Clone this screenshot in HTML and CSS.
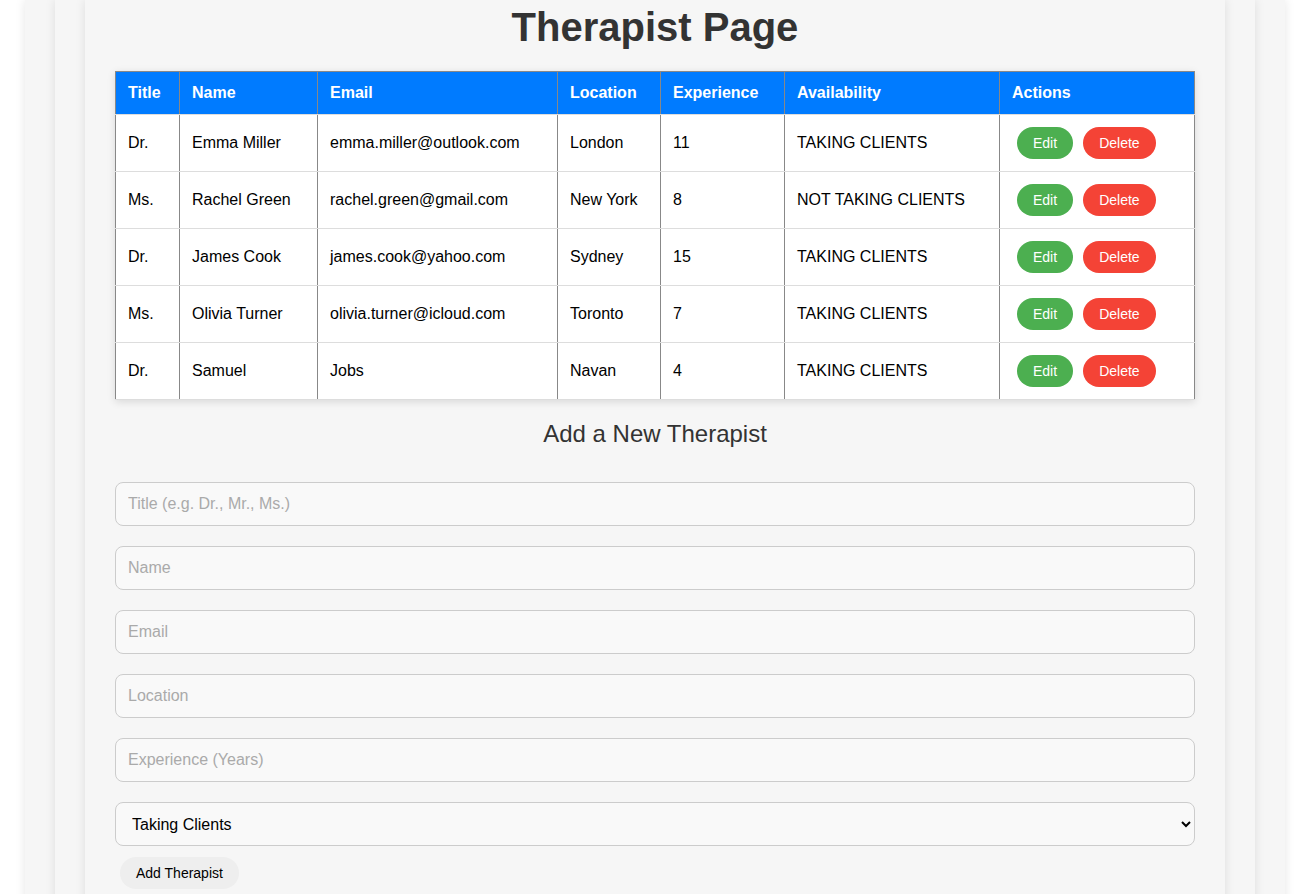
FILE: index.html
```html
<!DOCTYPE html>
<html lang="en">
<head>
<meta charset="utf-8">
<title>Therapist Page</title>
<link rel="stylesheet" href="styles.css">
</head>
<body>
<div class="layer layer-outer">
  <div class="layer layer-mid">
    <div class="layer layer-inner">
      <h1 class="page-title">Therapist Page</h1>
      <table class="therapists">
        <colgroup>
          <col class="c-title"><col class="c-name"><col class="c-email"><col class="c-loc"><col class="c-exp"><col class="c-avail"><col class="c-act">
        </colgroup>
        <thead>
          <tr><th>Title</th><th>Name</th><th>Email</th><th>Location</th><th>Experience</th><th>Availability</th><th>Actions</th></tr>
        </thead>
        <tbody>
          <tr><td>Dr.</td><td>Emma Miller</td><td>emma.miller@outlook.com</td><td>London</td><td>11</td><td>TAKING CLIENTS</td><td><button class="btn btn-edit">Edit</button><button class="btn btn-delete">Delete</button></td></tr>
          <tr><td>Ms.</td><td>Rachel Green</td><td>rachel.green@gmail.com</td><td>New York</td><td>8</td><td>NOT TAKING CLIENTS</td><td><button class="btn btn-edit">Edit</button><button class="btn btn-delete">Delete</button></td></tr>
          <tr><td>Dr.</td><td>James Cook</td><td>james.cook@yahoo.com</td><td>Sydney</td><td>15</td><td>TAKING CLIENTS</td><td><button class="btn btn-edit">Edit</button><button class="btn btn-delete">Delete</button></td></tr>
          <tr><td>Ms.</td><td>Olivia Turner</td><td>olivia.turner@icloud.com</td><td>Toronto</td><td>7</td><td>TAKING CLIENTS</td><td><button class="btn btn-edit">Edit</button><button class="btn btn-delete">Delete</button></td></tr>
          <tr><td>Dr.</td><td>Samuel</td><td>Jobs</td><td>Navan</td><td>4</td><td>TAKING CLIENTS</td><td><button class="btn btn-edit">Edit</button><button class="btn btn-delete">Delete</button></td></tr>
        </tbody>
      </table>
      <h2 class="form-title">Add a New Therapist</h2>
      <form class="add-form">
        <input class="field" type="text" placeholder="Title (e.g. Dr., Mr., Ms.)">
        <input class="field" type="text" placeholder="Name">
        <input class="field" type="text" placeholder="Email">
        <input class="field" type="text" placeholder="Location">
        <input class="field" type="text" placeholder="Experience (Years)">
        <select class="field field-select">
          <option>Taking Clients</option>
          <option>Not Taking Clients</option>
        </select>
        <button type="button" class="btn btn-add">Add Therapist</button>
      </form>
    </div>
  </div>
</div>
</body>
</html>
```
FILE: styles.css
```css
* { box-sizing: border-box; }
html, body { margin: 0; padding: 0; }
body {
  background: #ffffff;
  font-family: "Liberation Sans", Arial, sans-serif;
  color: #000;
  overflow: hidden;
}
.layer {
  background: #f6f6f6;
  box-shadow: 0 0 10px rgba(0, 0, 0, 0.1);
  padding: 0 30px 30px;
}
.layer-outer {
  width: 1260px;
  margin-left: 25px;
  min-height: 1000px;
}
.layer-mid { min-height: 1000px; }
.layer-inner { min-height: 1000px; padding-top: 4px; }

.page-title {
  margin: 0 0 21px;
  text-align: center;
  font-size: 40px;
  font-weight: bold;
  color: #333;
  line-height: 46px;
}

.therapists {
  width: 1080px;
  border-collapse: collapse;
  table-layout: fixed;
  background: #fff;
  box-shadow: 0 2px 8px rgba(0, 0, 0, 0.12);
  font-size: 16px;
}
.c-title { width: 64px; }
.c-name { width: 138px; }
.c-email { width: 240px; }
.c-loc { width: 103px; }
.c-exp { width: 124px; }
.c-avail { width: 215px; }
.c-act { width: 195px; }

.therapists th {
  background: #007bff;
  color: #fff;
  font-weight: bold;
  text-align: left;
  padding: 12px;
  height: 43px;
  border: 1px solid #888;
  border-bottom: 1px solid #ddd;
}
.therapists td {
  padding: 12px;
  height: 57px;
  text-align: left;
  border-left: 1px solid #888;
  border-right: 1px solid #888;
  border-bottom: 1px solid #ddd;
  white-space: nowrap;
}

.btn {
  font-family: "Liberation Sans", Arial, sans-serif;
  font-size: 14px;
  line-height: 16px;
  border: none;
  border-radius: 20px;
  padding: 8px 16px;
  margin: 0 5px;
  cursor: pointer;
  color: #fff;
}
.btn-edit { background: #4caf50; }
.btn-delete { background: #f44336; }

.form-title {
  margin: 20px 0 0;
  text-align: center;
  font-size: 24px;
  font-weight: normal;
  color: #333;
  line-height: 28px;
}

.add-form {
  margin-top: 34px;
  display: flex;
  flex-direction: column;
  align-items: flex-start;
}
.field {
  width: 100%;
  height: 44px;
  padding: 0 12px;
  margin: 0 0 20px;
  border: 1px solid #ccc;
  border-radius: 8px;
  background: #f9f9f9;
  font-family: "Liberation Sans", Arial, sans-serif;
  font-size: 16px;
  color: #000;
}
.field::placeholder { color: #aaa; }
.field-select {
  margin-bottom: 6px;
  padding-left: 12px;
}
.btn-add {
  background: #eee;
  color: #000;
  margin: 5px 5px;
}
```
